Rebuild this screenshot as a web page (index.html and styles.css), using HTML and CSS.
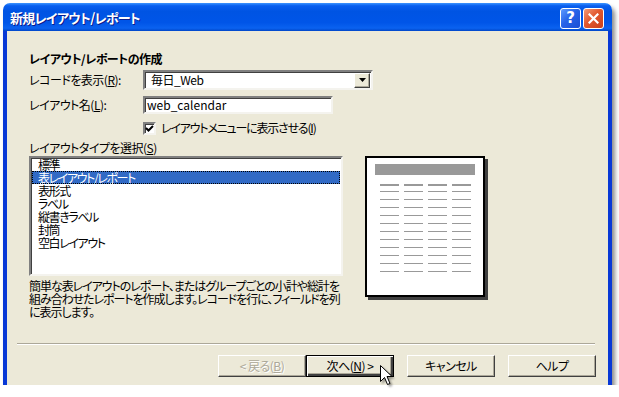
FILE: index.html
```html
<!DOCTYPE html>
<html lang="ja">
<head>
    <meta charset="UTF-8">
    <meta name="viewport" content="width=device-width, initial-scale=1.0">
    <title>新規レイアウト/レポート</title>
    <link rel="stylesheet" href="styles.css">
</head>
<body>
    <div class="window">
        <div class="titlebar">
            <span class="title">新規レイアウト/レポート</span>
            <div class="caption-buttons">
                <span class="cap-btn cap-help">?</span>
                <span class="cap-btn cap-close">
                    <svg width="11" height="11" viewBox="0 0 11 11"><path d="M1.5 1.5 L9.5 9.5 M9.5 1.5 L1.5 9.5" stroke="#fff" stroke-width="2.2" stroke-linecap="square"/></svg>
                </span>
            </div>
        </div>

        <div class="client">
            <h2 class="section-title">レイアウト/レポートの作成</h2>

            <div class="field-row">
                <label class="field-label">レコードを表示(<u>R</u>):</label>
                <div class="combo">
                    <span class="combo-value">毎日_Web</span>
                    <span class="combo-btn">
                        <svg width="7" height="4" viewBox="0 0 7 4"><path d="M0 0 H7 L3.5 4 Z" fill="#000"/></svg>
                    </span>
                </div>
            </div>

            <div class="field-row name-row">
                <label class="field-label">レイアウト名(<u>L</u>):</label>
                <div class="textbox">web_calendar</div>
            </div>

            <div class="check-row">
                <span class="checkbox">
                    <svg width="9" height="9" viewBox="0 0 9 9"><path d="M1 4 L3.5 6.5 L8 2" stroke="#000" stroke-width="2" fill="none"/></svg>
                </span>
                <span class="check-label">レイアウトメニューに表示させる(<u>I</u>)</span>
            </div>

            <div class="list-label">レイアウトタイプを選択(<u>S</u>)</div>

            <div class="type-area">
                <div class="type-left">
                    <ul class="listbox">
                        <li>標準</li>
                        <li class="selected">表レイアウト/レポート</li>
                        <li>表形式</li>
                        <li>ラベル</li>
                        <li>縦書きラベル</li>
                        <li>封筒</li>
                        <li>空白レイアウト</li>
                    </ul>
                    <p class="description">簡単な表レイアウトのレポート、またはグループごとの小計や総計を<br>組み合わせたレポートを作成します。レコードを行に、フィールドを列<br>に表示します。</p>
                </div>
                <div class="preview">
                    <svg width="116" height="137" viewBox="0 0 116 137">
                        <defs>
                            <pattern id="rows" x="13" y="33" width="24" height="8" patternUnits="userSpaceOnUse">
                                <rect x="0" y="0" width="19" height="1" fill="#999"/>
                            </pattern>
                            <pattern id="heads" x="13" y="26" width="24" height="2" patternUnits="userSpaceOnUse">
                                <rect x="0" y="0" width="19" height="2" fill="#999"/>
                            </pattern>
                        </defs>
                        <rect x="8" y="6" width="100" height="11" fill="#999"/>
                        <rect x="13" y="26" width="91" height="2" fill="url(#heads)"/>
                        <rect x="13" y="33" width="91" height="82" fill="url(#rows)"/>
                    </svg>
                </div>
            </div>

            <div class="separator"></div>

            <div class="button-row">
                <button class="btn" disabled>&lt; 戻る(<u>B</u>)</button>
                <button class="btn btn-default">次へ(<u>N</u>) &gt;</button>
                <button class="btn gap">キャンセル</button>
                <button class="btn gap">ヘルプ</button>
            </div>
        </div>
    </div>

    <!-- mouse pointer sitting over the Next button -->
    <svg class="pointer" width="14" height="22" viewBox="0 0 14 22">
        <path d="M0.5 0.5 V16.5 L4.5 12.5 L7.5 19.5 L10 18.5 L7 11.5 H12 Z" fill="#fff" stroke="#000" stroke-width="1" stroke-linejoin="miter"/>
    </svg>
</body>
</html>
```

FILE: styles.css
```css
body {
    margin: 0;
    padding: 0;
    background-color: #fff;
    font-family: "Noto Sans CJK JP", sans-serif;
    font-size: 12px;
    font-feature-settings: "palt";
    letter-spacing: -0.5px;
    color: #000;
}

u {
    text-decoration: underline;
    text-underline-offset: 1px;
}

.window {
    margin: 3px 0 0 3px;
    width: 609px;
    height: 382px;
    border-radius: 7px 7px 0 0;
    box-shadow: 3px 4px 4px rgba(0, 0, 0, 0.45);
}

.titlebar {
    height: 28px;
    display: flex;
    align-items: center;
    justify-content: space-between;
    padding: 0 8px 0 7px;
    border-radius: 7px 7px 0 0;
    background: linear-gradient(to bottom, #3d95ff 0%, #0a5fef 10%, #0054e3 30%, #0055e8 70%, #0a62f0 90%, #0045c8 100%);
}

.title {
    color: #fff;
    font-weight: bold;
    font-size: 13px;
    line-height: 14px;
    letter-spacing: -0.7px;
    text-shadow: 1px 1px 0 #0a1c8c;
    padding-top: 1px;
}

.caption-buttons {
    display: flex;
    gap: 2px;
    padding-top: 2px;
}

.cap-btn {
    width: 19px;
    height: 19px;
    border: 1px solid #fff;
    border-radius: 3px;
    display: flex;
    align-items: center;
    justify-content: center;
    color: #fff;
    font-family: "DejaVu Sans", sans-serif;
    font-weight: bold;
    font-size: 15px;
    letter-spacing: 0;
}

.cap-help {
    background: linear-gradient(135deg, #5d9bff 0%, #2663e8 45%, #1c4ed4 100%);
}

.cap-close {
    background: linear-gradient(135deg, #f29a77 0%, #e2582e 45%, #c8401c 100%);
}

.client {
    position: relative;
    height: 354px;
    background-color: #ece9d8;
    border: 4px solid #0838d6;
    border-top: none;
    padding: 21px 0 0 22px;
    width: 579px;
}

.section-title {
    margin: 0;
    font-size: 12px;
    font-weight: bold;
    line-height: 14px;
}

.field-row {
    display: flex;
    align-items: center;
    margin-top: 4px;
    height: 20px;
}

.name-row {
    margin-top: 6px;
    height: 18px;
}

.field-label {
    width: 114px;
    line-height: 14px;
}

.combo {
    width: 226px;
    height: 16px;
    background: #fff;
    border: 2px solid;
    border-color: #808080 #f4f3ee #f4f3ee #808080;
    box-shadow: inset 1px 1px 0 #404040;
    display: flex;
    align-items: center;
    justify-content: space-between;
}

.combo-value {
    padding-left: 6px;
    line-height: 14px;
}

.combo-btn {
    width: 14px;
    height: 13px;
    margin-right: 1px;
    background: #ece9d8;
    border: 1px solid;
    border-color: #fff #404040 #404040 #fff;
    box-shadow: inset -1px -1px 0 #aca899;
    display: flex;
    align-items: center;
    justify-content: center;
}

.textbox {
    width: 184px;
    height: 14px;
    background: #fff;
    border: 2px solid;
    border-color: #808080 #f4f3ee #f4f3ee #808080;
    box-shadow: inset 1px 1px 0 #404040;
    line-height: 14px;
    padding-left: 2px;
    letter-spacing: 0;
}

.check-row {
    display: flex;
    align-items: center;
    gap: 5px;
    margin: 7px 0 0 114px;
    height: 14px;
    line-height: 14px;
}

.check-label {
    letter-spacing: -1.2px;
}

.checkbox {
    width: 9px;
    height: 9px;
    background: #fff;
    border: 2px solid;
    border-color: #808080 #f4f3ee #f4f3ee #808080;
    box-shadow: inset 1px 1px 0 #404040;
    display: flex;
    align-items: center;
    justify-content: center;
}

.list-label {
    margin-top: 6px;
    line-height: 14px;
}

.type-area {
    display: flex;
    gap: 22px;
    margin-top: 1px;
}

.type-left {
    width: 314px;
}

.listbox {
    list-style: none;
    margin: 0;
    padding: 0;
    height: 116px;
    background: #fff;
    border: 2px solid;
    border-color: #808080 #f4f3ee #f4f3ee #808080;
    box-shadow: inset 1px 1px 0 #404040;
}

.listbox li {
    height: 13px;
    line-height: 13px;
    padding-left: 6px;
    margin-left: 1px;
    white-space: nowrap;
    letter-spacing: -1.4px;
}

.listbox li.selected {
    background: #316ac5;
    color: #fff;
    outline: 1px dotted #000;
    outline-offset: -1px;
    margin-right: 1px;
}

.description {
    margin: 3px 0 0 0;
    line-height: 13px;
    white-space: nowrap;
    letter-spacing: -1.05px;
}

.preview {
    width: 116px;
    height: 137px;
    border: 2px solid #000;
    background: #fff;
    box-shadow: 3px 3px 0 #404040;
}

.preview svg {
    display: block;
}

.separator {
    margin: 25px 0 0 -12px;
    width: 578px;
    height: 0;
    border-top: 1px solid #aca899;
    border-bottom: 1px solid #fff;
}

.button-row {
    display: flex;
    justify-content: flex-end;
    margin: 10px 12px 0 0;
}

.btn {
    width: 88px;
    height: 22px;
    padding: 0;
    font-family: inherit;
    font-size: 12px;
    font-feature-settings: "palt";
    letter-spacing: -0.5px;
    line-height: 14px;
    color: #000;
    background: #ece9d8;
    border: 1px solid;
    border-color: #fff #404040 #404040 #fff;
    box-shadow: inset -1px -1px 0 #aca899;
}

.btn:disabled {
    color: #aca899;
    text-shadow: 1px 1px 0 #fff;
}

.btn-default {
    border: 1px solid #000;
    box-shadow: inset 1px 1px 0 #fff, inset -2px -2px 0 #404040, inset -3px -3px 0 #aca899;
}

.gap {
    margin-left: 13px;
}

.pointer {
    position: absolute;
    left: 380px;
    top: 365px;
    filter: drop-shadow(2px 2px 1px rgba(0, 0, 0, 0.35));
}
```
